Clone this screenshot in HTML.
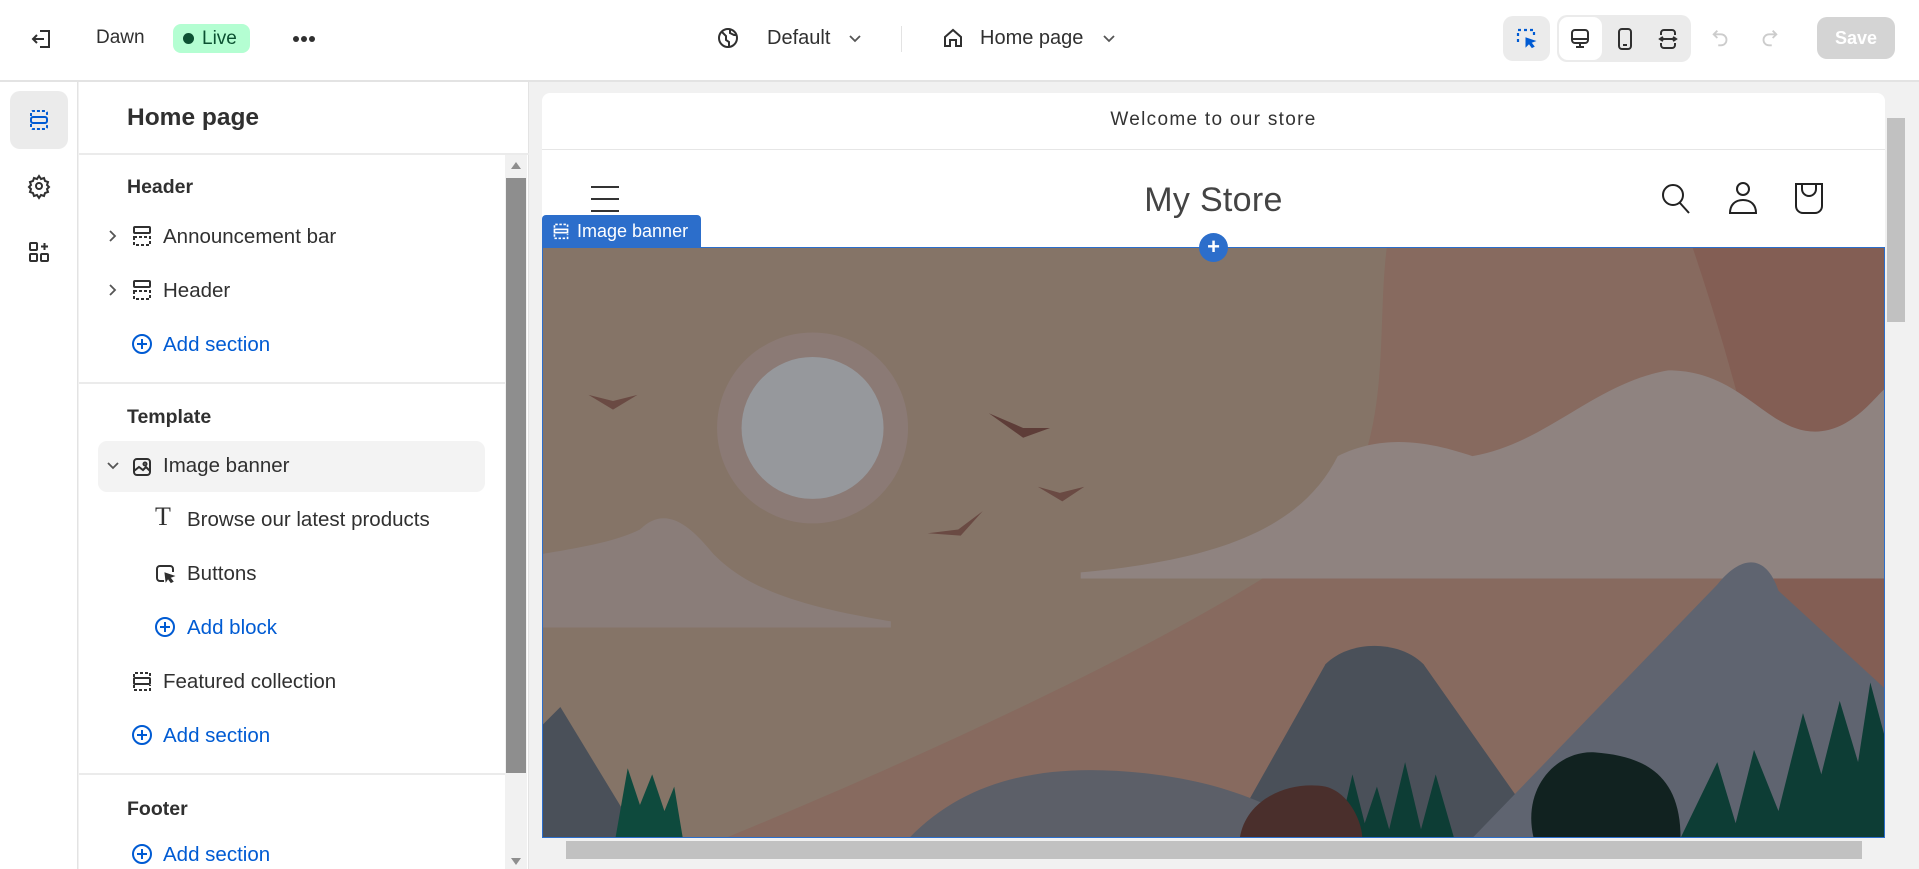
<!DOCTYPE html>
<html><head><meta charset="utf-8"><style>
*{box-sizing:border-box;margin:0;padding:0}
body{width:1919px;height:869px;overflow:hidden;background:#f1f1f1;font-family:"Liberation Sans",sans-serif;color:#303030;position:relative}
.abs{position:absolute}
.top{left:0;top:0;width:1919px;height:82px;background:#fff;border-bottom:2px solid #e3e3e3}
.rail{left:0;top:82px;width:78px;height:787px;background:#fff;border-right:1px solid #e3e3e3}
.panel{left:79px;top:82px;width:450px;height:787px;background:#fff;border-right:1px solid #e3e3e3}
.t{position:absolute;font-size:19px;white-space:nowrap;line-height:22px}
.l{font-size:20.5px}
.b{font-weight:bold}
.blue{color:#005bd3}
svg{position:absolute;overflow:visible}
</style></head><body>
<div class="abs top"></div>
<svg style="left:30px;top:27px" width="24" height="24" viewBox="0 0 24 24" fill="none" stroke="#303030" stroke-width="2"><path d="M10 4h9v16h-9M3 12h11M7 8l-4 4 4 4"/></svg>
<div class="t" style="left:96px;top:27px">Dawn</div>
<div class="abs" style="left:173px;top:24px;width:77px;height:29px;background:#b4fed2;border-radius:8px"></div>
<div class="abs" style="left:183px;top:33px;width:11px;height:11px;background:#0c5132;border-radius:50%"></div>
<div class="t" style="left:202px;top:28px;color:#0c5132">Live</div>
<div class="abs" style="left:293px;top:36px;width:6px;height:6px;background:#303030;border-radius:50%"></div>
<div class="abs" style="left:301px;top:36px;width:6px;height:6px;background:#303030;border-radius:50%"></div>
<div class="abs" style="left:309px;top:36px;width:6px;height:6px;background:#303030;border-radius:50%"></div>
<svg style="left:716px;top:26px" width="24" height="24" viewBox="0 0 24 24" fill="none" stroke="#303030" stroke-width="2"><circle cx="12" cy="12" r="9"/><path d="M6 6l4 4v4l3 2v5M14 3v4l4 2 3 0"/></svg>
<div class="t" style="left:767px;top:27px;font-size:20px">Default</div>
<svg style="left:848px;top:34px" width="14" height="10" viewBox="0 0 14 10" fill="none" stroke="#555" stroke-width="1.8"><path d="M2 2l5 5 5-5"/></svg>
<div class="abs" style="left:901px;top:26px;width:1px;height:26px;background:#e3e3e3"></div>
<svg style="left:941px;top:26px" width="24" height="24" viewBox="0 0 24 24" fill="none" stroke="#303030" stroke-width="2"><path d="M4 11l8-7 8 7v9h-5v-6h-6v6H4z"/></svg>
<div class="t" style="left:980px;top:27px;font-size:20px">Home page</div>
<svg style="left:1102px;top:34px" width="14" height="10" viewBox="0 0 14 10" fill="none" stroke="#555" stroke-width="1.8"><path d="M2 2l5 5 5-5"/></svg>
<div class="abs" style="left:1503px;top:16px;width:47px;height:45px;background:#ebebeb;border-radius:10px"></div>
<svg style="left:1515px;top:27px" width="24" height="24" viewBox="0 0 24 24" fill="none" stroke="#005bd3" stroke-width="2.2" stroke-dasharray="3 3"><path d="M3 15V3h16v6"/><path d="M11 11l9 3-4 1.5 3 4-2 1-3-4-3 3z" fill="#005bd3" stroke-dasharray="none" stroke-width="1"/></svg>
<div class="abs" style="left:1557px;top:15px;width:134px;height:47px;background:#ebebeb;border-radius:10px"></div>
<div class="abs" style="left:1559px;top:17px;width:43px;height:43px;background:#fff;border-radius:9px"></div>
<svg style="left:1568px;top:27px" width="24" height="24" viewBox="0 0 24 24" fill="none" stroke="#303030" stroke-width="2"><rect x="4" y="3" width="16" height="13" rx="3"/><path d="M4 12h16M12 16v4M8 20h8"/></svg>
<svg style="left:1613px;top:27px" width="24" height="24" viewBox="0 0 24 24" fill="none" stroke="#303030" stroke-width="2"><rect x="6" y="2" width="12" height="20" rx="3"/><path d="M10 18h4"/></svg>
<svg style="left:1656px;top:27px" width="24" height="24" viewBox="0 0 24 24" fill="none" stroke="#303030" stroke-width="2"><path d="M5 8V6a3 3 0 013-3h8a3 3 0 013 3v2M5 16v2a3 3 0 003 3h8a3 3 0 003-3v-2M4 12h16M7 10l-3 2 3 2M17 10l3 2-3 2"/></svg>
<svg style="left:1710px;top:27px" width="22" height="22" viewBox="0 0 24 24" fill="none" stroke="#ccc" stroke-width="2"><path d="M8 4L4 8l4 4M4 8h8a6 6 0 010 12H9"/></svg>
<svg style="left:1758px;top:27px" width="22" height="22" viewBox="0 0 24 24" fill="none" stroke="#ccc" stroke-width="2"><path d="M16 4l4 4-4 4M20 8h-8a6 6 0 000 12h3"/></svg>
<div class="abs" style="left:1817px;top:17px;width:78px;height:42px;background:#d4d4d4;border-radius:10px;color:#fff;font-weight:bold;font-size:18px;text-align:center;line-height:42px">Save</div>

<div class="abs rail"></div>
<div class="abs" style="left:10px;top:91px;width:58px;height:58px;background:#ebebeb;border-radius:10px"></div>
<svg style="left:27px;top:108px" width="24" height="24" viewBox="0 0 24 24" fill="none" stroke="#005bd3" stroke-width="2"><path d="M4 8V5a2 2 0 012-2h12a2 2 0 012 2v3" stroke-dasharray="3 2"/><rect x="4" y="9" width="16" height="6" rx="2"/><path d="M4 16v3a2 2 0 002 2h12a2 2 0 002-2v-3" stroke-dasharray="3 2"/></svg>
<svg style="left:27px;top:174px" width="24" height="24" viewBox="0 0 24 24" fill="none" stroke="#303030" stroke-width="2"><circle cx="12" cy="12" r="3"/><path d="M12 2l2 3 3-1 1 3 3 1-1 3 2 2-2 2 1 3-3 1-1 3-3-1-2 3-2-3-3 1-1-3-3-1 1-3-2-2 2-2-1-3 3-1 1-3 3 1z"/></svg>
<svg style="left:27px;top:240px" width="24" height="24" viewBox="0 0 24 24" fill="none" stroke="#303030" stroke-width="2"><rect x="3" y="3" width="7" height="7" rx="1"/><rect x="3" y="14" width="7" height="7" rx="1"/><rect x="14" y="14" width="7" height="7" rx="1"/><path d="M17.5 3v7M14 6.5h7"/></svg>

<div class="abs panel"></div>
<div class="t b" style="left:127px;top:104px;font-size:24.5px;line-height:28px">Home page</div>
<div class="abs" style="left:79px;top:153px;width:450px;height:2px;background:#ebebeb"></div>
<div class="t b" style="left:127px;top:176px;font-size:19.5px">Header</div>
<svg style="left:107px;top:228px" width="10" height="16" viewBox="0 0 10 16" fill="none" stroke="#555" stroke-width="1.8"><path d="M3 3l5 5-5 5"/></svg>
<svg style="left:131px;top:225px" width="22" height="22" viewBox="0 0 22 22" fill="none" stroke="#303030" stroke-width="2"><rect x="3" y="2" width="16" height="6" rx="1"/><path d="M3 12v8h16v-8z" stroke-dasharray="3 2"/></svg>
<div class="t l" style="left:163px;top:226px">Announcement bar</div>
<svg style="left:107px;top:282px" width="10" height="16" viewBox="0 0 10 16" fill="none" stroke="#555" stroke-width="1.8"><path d="M3 3l5 5-5 5"/></svg>
<svg style="left:131px;top:279px" width="22" height="22" viewBox="0 0 22 22" fill="none" stroke="#303030" stroke-width="2"><rect x="3" y="2" width="16" height="6" rx="1"/><path d="M3 12v8h16v-8z" stroke-dasharray="3 2"/></svg>
<div class="t l" style="left:163px;top:280px">Header</div>
<svg style="left:131px;top:333px" width="22" height="22" viewBox="0 0 22 22" fill="none" stroke="#005bd3" stroke-width="2"><circle cx="11" cy="11" r="9"/><path d="M11 6v10M6 11h10"/></svg>
<div class="t l blue" style="left:163px;top:334px">Add section</div>
<div class="abs" style="left:79px;top:382px;width:426px;height:2px;background:#ebebeb"></div>
<div class="t b" style="left:127px;top:406px;font-size:19.5px">Template</div>
<div class="abs" style="left:98px;top:441px;width:387px;height:51px;background:#f3f3f3;border-radius:9px"></div>
<svg style="left:105px;top:461px" width="16" height="10" viewBox="0 0 16 10" fill="none" stroke="#555" stroke-width="1.8"><path d="M3 2l5 5 5-5"/></svg>
<svg style="left:131px;top:456px" width="22" height="22" viewBox="0 0 22 22" fill="none" stroke="#303030" stroke-width="2"><rect x="3" y="3" width="16" height="16" rx="3"/><path d="M3 15l5-4 4 3 3-3 4 4"/><circle cx="14" cy="8" r="1.5"/></svg>
<div class="t l" style="left:163px;top:455px">Image banner</div>
<div class="t" style="left:155px;top:506px;font-family:'Liberation Serif',serif;font-size:26px">T</div>
<div class="t l" style="left:187px;top:509px">Browse our latest products</div>
<svg style="left:154px;top:562px" width="24" height="24" viewBox="0 0 24 24" fill="none" stroke="#303030" stroke-width="2"><path d="M10 19H6a3 3 0 01-3-3V7a3 3 0 013-3h10a3 3 0 013 3v3"/><path d="M11 11l9 3-4 1.5 3 4-2 1-3-4-2 3z" fill="#303030" stroke-width="1"/></svg>
<div class="t l" style="left:187px;top:563px">Buttons</div>
<svg style="left:154px;top:616px" width="22" height="22" viewBox="0 0 22 22" fill="none" stroke="#005bd3" stroke-width="2"><circle cx="11" cy="11" r="9"/><path d="M11 6v10M6 11h10"/></svg>
<div class="t l blue" style="left:187px;top:617px">Add block</div>
<svg style="left:131px;top:670px" width="22" height="22" viewBox="0 0 22 22" fill="none" stroke="#303030" stroke-width="2"><path d="M3 7V3h16v4" stroke-dasharray="3 2"/><rect x="3" y="8" width="16" height="6" rx="1"/><path d="M3 15v5h16v-5" stroke-dasharray="3 2"/></svg>
<div class="t l" style="left:163px;top:671px">Featured collection</div>
<svg style="left:131px;top:724px" width="22" height="22" viewBox="0 0 22 22" fill="none" stroke="#005bd3" stroke-width="2"><circle cx="11" cy="11" r="9"/><path d="M11 6v10M6 11h10"/></svg>
<div class="t l blue" style="left:163px;top:725px">Add section</div>
<div class="abs" style="left:79px;top:773px;width:426px;height:2px;background:#ebebeb"></div>
<div class="t b" style="left:127px;top:798px;font-size:19.5px">Footer</div>
<svg style="left:131px;top:843px" width="22" height="22" viewBox="0 0 22 22" fill="none" stroke="#005bd3" stroke-width="2"><circle cx="11" cy="11" r="9"/><path d="M11 6v10M6 11h10"/></svg>
<div class="t l blue" style="left:163px;top:844px">Add section</div>
<div class="abs" style="left:505px;top:155px;width:22px;height:714px;background:#f1f1f1"></div>
<div class="abs" style="left:506px;top:178px;width:20px;height:595px;background:#8e8e8e"></div>
<div class="abs" style="left:511px;top:162px;width:0;height:0;border-left:5px solid transparent;border-right:5px solid transparent;border-bottom:7px solid #8e8e8e"></div>
<div class="abs" style="left:511px;top:858px;width:0;height:0;border-left:5px solid transparent;border-right:5px solid transparent;border-top:7px solid #8e8e8e"></div>

<div class="abs" style="left:542px;top:93px;width:1343px;height:155px;background:#fff;border-radius:8px 8px 0 0"></div>
<div class="t" style="left:542px;top:109px;width:1343px;text-align:center;font-size:19px;letter-spacing:1.3px;color:#333">Welcome to our store</div>
<div class="abs" style="left:542px;top:149px;width:1343px;height:1px;background:#e6e6e6"></div>
<div class="t" style="left:542px;top:180px;width:1343px;text-align:center;font-size:34px;line-height:40px;color:#444;letter-spacing:.3px">My Store</div>
<svg style="left:590px;top:184px" width="30" height="30" viewBox="0 0 30 30" stroke="#333" stroke-width="2"><path d="M1 3h28M1 15h28M1 27h28"/></svg>
<svg style="left:1660px;top:182px" width="32" height="32" viewBox="0 0 32 32" fill="none" stroke="#222" stroke-width="2"><circle cx="13" cy="13" r="10"/><path d="M20 21l9 10"/></svg>
<svg style="left:1727px;top:181px" width="32" height="34" viewBox="0 0 32 34" fill="none" stroke="#222" stroke-width="2"><circle cx="16" cy="8" r="6"/><path d="M3 32c0-8 5-13 13-13s13 5 13 13z"/></svg>
<svg style="left:1793px;top:181px" width="32" height="34" viewBox="0 0 32 34" fill="none" stroke="#222" stroke-width="2"><path d="M3 3h26v22a7 7 0 01-7 7H10a7 7 0 01-7-7z"/><path d="M9 3v5a7 7 0 0014 0V3"/></svg>

<svg style="left:542px;top:248px" width="1343" height="590" viewBox="0 0 1097 482" preserveAspectRatio="none">
<rect width="1097" height="482" fill="#857467"/>
<path d="M690 0L1097 0V482H150C300 420 500 330 620 250C700 180 680 80 690 0Z" fill="#876a5f"/>
<path d="M940 0H1097V482H980C1050 350 980 120 940 0Z" fill="#835e54"/>
<circle cx="221" cy="147" r="78" fill="#8b7a75"/><circle cx="221" cy="147" r="58" fill="#96989c"/>
<path d="M440 265C550 255 620 230 650 170C690 150 730 160 760 170C820 160 860 110 920 100C980 100 1000 150 1040 150C1070 150 1090 120 1097 115V270H440Z" fill="#8f8380"/>
<path d="M0 250C30 245 60 240 80 230C100 210 120 225 140 250C160 270 190 290 285 305L285 310H0Z" fill="#8a7d79"/>
<path d="M38 120l20 5 20-5-20 12Z" fill="#6a4a43"/>
<path d="M365 135l28 12 22 0-22 8Z" fill="#5e3d38"/>
<path d="M405 195l18 5 20-5-18 12Z" fill="#6a4a43"/>
<path d="M315 233l25 -3 20-15-18 20Z" fill="#6a4a43"/>
<path d="M560 482L640 340C660 320 700 320 720 340L820 482Z" fill="#4a5059"/>
<path d="M760 482L960 275C980 250 1000 250 1010 280L1097 360V482Z" fill="#5f6470"/>
<path d="M300 482C350 430 420 420 500 430C580 440 620 470 640 482Z" fill="#5c5f68"/>
<path d="M0 390L15 375L80 482H0Z" fill="#4a5059"/>
<path d="M60 482L70 425L80 455L90 430L100 460L108 440L115 482Z" fill="#0e4a3d"/>
<path d="M650 482L662 430L672 470L682 440L692 475L705 420L718 475L730 430L745 482Z" fill="#0d3d35"/>
<path d="M570 482C575 450 610 435 640 440C660 445 670 470 670 482Z" fill="#4a2f2c"/>
<path d="M810 482C800 440 830 410 860 412C900 415 930 430 930 482Z" fill="#112220"/>
<path d="M930 482L960 420L975 470L990 410L1010 460L1030 380L1045 430L1060 370L1075 420L1085 355L1097 400V482Z" fill="#0d3d35"/>
</svg>
<div class="abs" style="left:542px;top:247px;width:1343px;height:591px;border:1px solid #2c6ecb"></div>
<div class="abs" style="left:542px;top:215px;width:159px;height:32px;background:#2c6ecb;border-radius:4px 4px 0 0"></div>
<svg style="left:552px;top:222px" width="18" height="18" viewBox="0 0 22 22" fill="none" stroke="#fff" stroke-width="2"><path d="M3 7V3h16v4" stroke-dasharray="3 2"/><rect x="3" y="9" width="16" height="4"/><path d="M3 15v5h16v-5" stroke-dasharray="3 2"/></svg>
<div class="t" style="left:577px;top:220px;color:#fff;font-size:18px">Image banner</div>
<div class="abs" style="left:1199px;top:233px;width:29px;height:29px;background:#2c6ecb;border-radius:50%;color:#fff;font-weight:bold;font-size:22px;text-align:center;line-height:28px">+</div>

<div class="abs" style="left:1885px;top:93px;width:21px;height:745px;background:#f1f1f1"></div>
<div class="abs" style="left:1887px;top:118px;width:18px;height:204px;background:#c1c1c1"></div>
<div class="abs" style="left:542px;top:838px;width:1343px;height:24px;background:#f1f1f1;border-radius:0 0 8px 8px"></div>
<div class="abs" style="left:566px;top:841px;width:1296px;height:18px;background:#c1c1c1"></div>
</body></html>
